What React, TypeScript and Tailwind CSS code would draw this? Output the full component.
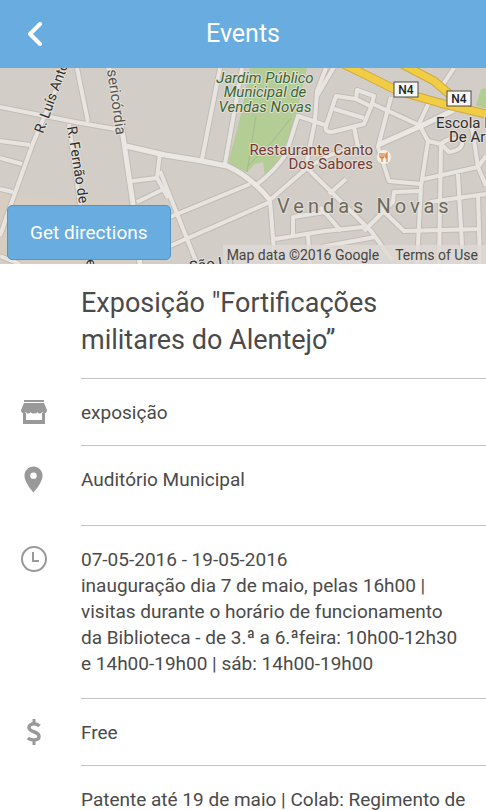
import React from 'react';
import { MdPlace } from 'react-icons/md';

// Street lines of the map, drawn on a 486x196 canvas
const STREETS = [
  'M0 39 L75 54 L121 62',
  'M66 -2 L33 75 L10 139 L0 168',
  'M77 0 L88 54',
  'M0 73 L30 77',
  'M0 90 L22 96',
  'M0 121 L13 124',
  'M69 56 L88 196',
  'M132 113 L157 110 M160 85 L157 110 L168 130',
  'M137 134 L168 119',
  'M0 188 L20 196',
  'M220 0 L202 91',
  'M242 0 L225 96',
  'M326 0 L317 23 L315 53 L307 93',
  'M325 57 L298 48 L286 86 Q276 102 255 118',
  'M170 149 L250 116',
  'M170 178 L270 134',
  'M160 103 L197 196',
  'M270 132 L275 196',
  'M270 132 L308 99 L330 87 L358 79',
  'M308 101 L371 163 L392 192',
  'M275 171 L325 163 L364 159',
  'M293 168 L293 149 L325 144',
  'M308 167 L310 196',
  'M334 -1 L317 28',
  'M336 28 L356 31 L357 22 L374 28 L371 39 L364 56 L332 64 Q324 64 326 58 Z',
  'M334 41 L364 50 M356 31 L372 39',
  'M373 36 L421 58',
  'M391 29 L378 79 L389 113 L421 116',
  'M430 32 L419 56 L428 73 L421 118 L417 196',
  'M354 59 L358 79',
  'M428 73 L441 76 L439 196',
  'M441 76 Q449 68 462 72 Q464 82 449 84 Z',
  'M424 111 L478 99 L486 88',
  'M471 53 L478 99 L486 118',
  'M458 106 L461 160 L463 196',
  'M478 126 L480 196',
  'M421 123 L394 124 L393 134 L364 163',
  'M379 139 L404 163 L481 161',
  'M430 134 L486 126',
  'M320 139 L341 163',
  'M346 111 L329 126',
  'M321 179 L375 169',
  'M454 0 L442 18',
];

const MAIN_STREETS = [
  'M108 -4 L123 68 L133 136 L140 196',
  'M126 78 L165 87 L202 93 L227 98 Q250 108 270 132',
  'M378 77 L421 58 L454 42',
];

const HIGHWAYS = [
  'M335 -8 L366 7 L398 23 L440 35 L490 47',
  'M400 -5 L434 13 L454 30',
];

function RoadShield({ x, y }: { x: number; y: number }) {
  return (
    <g>
      <rect x={x} y={y} width="24" height="15" fill="#f7f7f5" stroke="#4a4a4a" />
      <text x={x + 12} y={y + 12} textAnchor="middle" fontSize="12" fontWeight="500" fill="#222">
        N4
      </text>
    </g>
  );
}

function MapView() {
  return (
    <svg
      className="block h-full w-full"
      viewBox="0 0 486 196"
      preserveAspectRatio="xMidYMid slice"
      fontFamily="Roboto, sans-serif"
      role="img"
      aria-label="Map of Vendas Novas"
    >
      <rect width="486" height="196" fill="#d2cdc7" />
      <path d="M0 126 L140 136 L140 196 L0 196 Z" fill="#d8cdc1" />
      <path
        d="M250 0 L307 0 L292 63 L280 92 L265 108 L263 94 L255 96 L247 104 L228 96 L241 46 Z"
        fill="#b3cd94"
      />
      <path d="M256 48 L247 104 M291 50 L272 74 L248 98" fill="none" stroke="#a3b994" />
      <path d="M481 21 L486 20 L486 40 L476 38 Z" fill="#b3cd94" />

      <g fill="none" strokeLinejoin="round">
        {STREETS.map((d) => (
          <path key={d} d={d} stroke="#c1bcb6" strokeWidth="6" />
        ))}
        {MAIN_STREETS.map((d) => (
          <path key={d} d={d} stroke="#c1bcb6" strokeWidth="7" />
        ))}
        {STREETS.map((d) => (
          <path key={d} d={d} stroke="#e8e5e1" strokeWidth="4" />
        ))}
        {MAIN_STREETS.map((d) => (
          <path key={d} d={d} stroke="#ebe8e4" strokeWidth="5" />
        ))}
        {HIGHWAYS.map((d) => (
          <path key={d} d={d} stroke="#cfa93b" strokeWidth="9" />
        ))}
        {HIGHWAYS.map((d) => (
          <path key={d} d={d} stroke="#f0cd45" strokeWidth="7" />
        ))}
      </g>

      <RoadShield x={394} y={14} />
      <RoadShield x={447} y={23} />

      <g
        stroke="#e4e0da"
        strokeWidth="2"
        paintOrder="stroke"
        strokeLinejoin="round"
        fill="#2f2d2b"
        fontSize="15"
      >
        <g fontSize="14">
          <text transform="translate(43 66) rotate(-70)">R. Luís Anto</text>
          <text transform="translate(67 59) rotate(81)">R. Fernão de</text>
          <text transform="translate(86 192) rotate(81)">e</text>
        </g>
        <text transform="translate(107 2) rotate(82)" fill="#555">sericórdia</text>
        <text transform="translate(190 204) rotate(-8)">São Lu</text>
        <g fontStyle="italic" fill="#3a6630" textAnchor="middle">
          <text x="265" y="15">Jardim Público</text>
          <text x="265" y="29">Municipal de</text>
          <text x="265" y="44">Vendas Novas</text>
        </g>
        <g fill="#74392f" textAnchor="end">
          <text x="373" y="87">Restaurante Canto</text>
          <text x="373" y="101">Dos Sabores</text>
        </g>
        <text x="436" y="60">Escola P</text>
        <text x="449" y="74">De Art</text>
        <text x="277" y="145" fontSize="20" fill="#6d695d" className="tracking-[4px]">
          Vendas Novas
        </text>
      </g>

      <circle cx="384" cy="89" r="7" fill="#f3efe9" />
      <path
        d="M380 85 V88 Q380 90 382 90 Q384 90 384 88 V85 M382 85 V94 M387 94 V85 Q385 87 386 90 H387"
        fill="none"
        stroke="#d9843b"
        strokeWidth="1.2"
      />
    </svg>
  );
}

function StoreIcon() {
  return (
    <svg viewBox="0 0 26 24" className="w-[26px] h-6" fill="#999">
      <path d="M3 0h20v2H3z" />
      <path d="M3 3h20l3 7c0 4-3.500 4-5 2-1.300 2-3.500 2-4.500 0-1 2-6 2-7 0-1 2-3.200 2-4.500 0-1.500 2-5 2-5-2z" />
      <path d="M2 13h3v7h16v-7h3v11H2z" />
    </svg>
  );
}

function ClockIcon() {
  return (
    <svg viewBox="0 0 28 28" className="size-7" fill="none" stroke="#999">
      <circle cx="14" cy="14" r="12" strokeWidth="2" />
      <path d="M13 7v9h6" strokeWidth="2" />
    </svg>
  );
}

function DollarIcon() {
  return (
    <svg viewBox="0 0 16 26" className="w-4 h-[26px]" fill="none" stroke="#999">
      <path
        d="M13.500 7C12 5.500 10 4.800 8 4.800S3 6 3 8.500C3 13.500 13 12 13 17.300c0 2.500-2.300 3.700-5 3.700s-4.800-.8-6.200-2"
        strokeWidth="3.500"
      />
      <path d="M8 0v5M8 21v5" strokeWidth="3" />
    </svg>
  );
}

interface DetailRowProps {
  icon?: React.ReactNode;
  className?: string;
  children: React.ReactNode;
}

function DetailRow({ icon, className = 'pt-[21px] pb-[19px]', children }: DetailRowProps) {
  return (
    <div className="flex">
      <div className="w-[81px] shrink-0 pt-5 pr-[14px]">
        <div className="flex h-[26px] items-center justify-center">{icon}</div>
      </div>
      <div className={`flex-1 min-w-0 border-b border-[#c4c4c4] pr-5 ${className}`}>{children}</div>
    </div>
  );
}

export default function App() {
  return (
    <div className="min-h-screen bg-white font-[Roboto,sans-serif] text-[19px] leading-[26px] text-[#4a4a4a]">
      <header className="grid h-[68px] grid-cols-[70px_1fr_70px] items-center bg-[#68ace0] text-white">
        <button type="button" aria-label="Back" className="flex h-full items-center justify-center">
          <svg viewBox="0 0 16 24" className="w-4 h-6" fill="none" stroke="currentColor">
            <path d="M13 2L3 12l10 10" strokeWidth="4" strokeLinecap="round" strokeLinejoin="round" />
          </svg>
        </button>
        <h1 className="text-center text-[25px] leading-8">Events</h1>
      </header>

      <section className="relative h-[196px] overflow-hidden">
        <MapView />
        <button
          type="button"
          className="absolute bottom-1 left-[7px] h-[55px] rounded-[5px] border border-[#4f95cb] bg-[#68ace0] px-[22px] text-white"
        >
          Get directions
        </button>
        <div className="absolute right-0 bottom-0 flex h-[19px] items-center gap-4 bg-[#dedad5]/80 pr-2 pl-1 text-[14px] leading-4 text-[#444]">
          <span>Map data ©2016 Google</span>
          <a href="#terms">Terms of Use</a>
        </div>
      </section>

      <main>
        <DetailRow>
          <h2 className="text-[27px] leading-[37px]">
            Exposição "Fortificações
            <br />
            militares do Alentejo”
          </h2>
        </DetailRow>
        <DetailRow icon={<StoreIcon />}>exposição</DetailRow>
        <DetailRow icon={<MdPlace className="size-[31px] text-[#999]" />} className="pt-[21px] pb-8">
          Auditório Municipal
        </DetailRow>
        <DetailRow icon={<ClockIcon />} className="pt-[21px] pb-[21px]">
          <p>07-05-2016 - 19-05-2016</p>
          <p>
            inauguração dia 7 de maio, pelas 16h00 |
            <br />
            visitas durante o horário de funcionamento
            <br />
            da Biblioteca - de 3.ª a 6.ªfeira: 10h00-12h30
            <br />e 14h00-19h00 | sáb: 14h00-19h00
          </p>
        </DetailRow>
        <DetailRow icon={<DollarIcon />}>Free</DetailRow>
        <DetailRow>Patente até 19 de maio | Colab: Regimento de</DetailRow>
      </main>
    </div>
  );
}
